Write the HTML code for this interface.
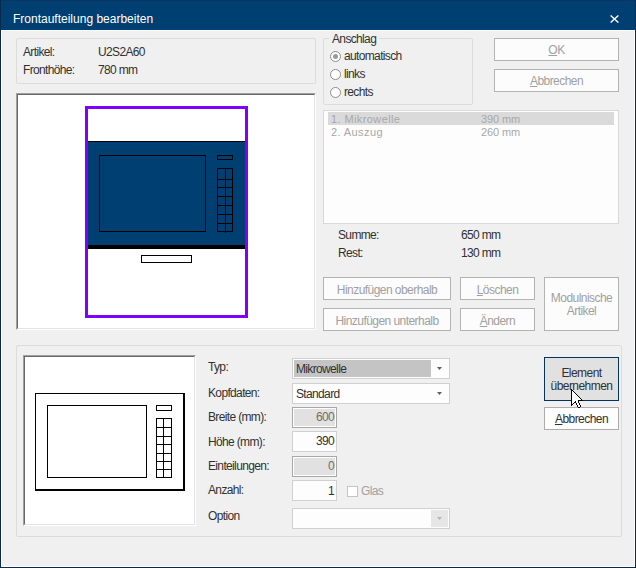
<!DOCTYPE html>
<html><head><meta charset="utf-8">
<style>
html,body{margin:0;padding:0;width:636px;height:568px;overflow:hidden;background:#f0f0f0}
#win{position:absolute;left:0;top:0;width:636px;height:568px;background:#f0f0f0}
.a{position:absolute;box-sizing:border-box}
.t{position:absolute;font:12px/14px "Liberation Sans",sans-serif;letter-spacing:-0.65px;white-space:nowrap;color:#303030}
.g{color:#a0a0a0}
.lg{color:#a8a8a8}
.grp{position:absolute;box-sizing:border-box;border:1px solid #dcdcdc;border-radius:2px}
.btn{position:absolute;box-sizing:border-box;border:1px solid #b3b3b3;background:#fcfcfc}
.bt{position:absolute;left:0;right:0;text-align:center;font:12px/14px "Liberation Sans",sans-serif;letter-spacing:-0.55px;white-space:nowrap;color:#a0a0a0}
.u{text-decoration:underline;text-underline-offset:1px}
.fld{position:absolute;box-sizing:border-box;border:1px solid #d0d0d0;background:#fdfdfd}
.fdis{position:absolute;box-sizing:border-box;border:1px solid #a8a8a8;background:#e1e1e1;box-shadow:inset 0 0 0 1px #fff}
</style></head><body>
<div id="win">
  <!-- title bar -->
  <div class="a" style="left:0;top:0;width:636px;height:30px;background:#003f72"></div>
  <div class="t" style="left:13px;top:12px;font:12px/14px 'Liberation Sans',sans-serif;letter-spacing:0;color:#fff">Frontaufteilung bearbeiten</div>
  <svg class="a" style="left:610px;top:15px" width="9" height="8" viewBox="0 0 9 8"><path d="M0.6 0.5L8.4 7.5M8.4 0.5L0.6 7.5" stroke="#fff" stroke-width="1.4"/></svg>
  <!-- window borders -->
  <div class="a" style="left:0;top:0;width:636px;height:1px;background:#0e3560"></div>
  <div class="a" style="left:0;top:0;width:1px;height:568px;background:#0b2a4a"></div>
  <div class="a" style="left:635px;top:0;width:1px;height:568px;background:#0b2a4a"></div>
  <div class="a" style="left:0;top:567px;width:636px;height:1px;background:#0b2a4a"></div>
  <div class="a" style="left:1px;top:30px;width:1px;height:537px;background:#fff"></div>
  <div class="a" style="left:634px;top:30px;width:1px;height:537px;background:#fff"></div>
  <div class="a" style="left:1px;top:566px;width:634px;height:1px;background:#fff"></div>
  <div class="a" style="left:1px;top:30px;width:634px;height:1px;background:#fff"></div>

  <!-- group 1 -->
  <div class="grp" style="left:16px;top:38px;width:300px;height:46px"></div>
  <div class="t" style="left:23px;top:45px">Artikel:</div>
  <div class="t" style="left:98px;top:45px">U2S2A60</div>
  <div class="t" style="left:23px;top:63px">Fronthöhe:</div>
  <div class="t" style="left:98px;top:63px">780 mm</div>

  <!-- Anschlag group -->
  <div class="grp" style="left:323px;top:38px;width:150px;height:67px"></div>
  <div class="a" style="left:329px;top:36px;width:50px;height:6px;background:#f0f0f0"></div>
  <div class="t" style="left:332px;top:32px">Anschlag</div>
  <div class="a" style="left:330px;top:51px;width:11px;height:11px;border:1px solid #8c8c8c;border-radius:50%;background:#fff"></div>
  <div class="a" style="left:333px;top:54px;width:5px;height:5px;border-radius:50%;background:#9a9a9a"></div>
  <div class="t" style="left:344px;top:49px">automatisch</div>
  <div class="a" style="left:330px;top:69px;width:11px;height:11px;border:1px solid #8c8c8c;border-radius:50%;background:#fff"></div>
  <div class="t" style="left:344px;top:67px">links</div>
  <div class="a" style="left:330px;top:87px;width:11px;height:11px;border:1px solid #8c8c8c;border-radius:50%;background:#fff"></div>
  <div class="t" style="left:344px;top:85px">rechts</div>

  <!-- OK / Abbrechen -->
  <div class="btn" style="left:494px;top:38px;width:125px;height:23px"><div class="bt" style="top:4px"><span class="u">O</span>K</div></div>
  <div class="btn" style="left:494px;top:69px;width:125px;height:23px"><div class="bt" style="top:4px"><span class="u">A</span>bbrechen</div></div>

  <!-- preview panel -->
  <div class="a" style="left:16px;top:93px;width:300px;height:237px;background:#fff;border-top:1px solid #a0a0a0;border-left:1px solid #a0a0a0;border-right:1px solid #fff;border-bottom:1px solid #fff"></div>
  <div class="a" style="left:17px;top:94px;width:298px;height:235px;border-top:1px solid #696969;border-left:1px solid #696969;border-right:1px solid #e3e3e3;border-bottom:1px solid #e3e3e3"></div>

  <!-- list box -->
  <div class="a" style="left:323px;top:110px;width:296px;height:114px;border:1px solid #d9d9d9;background:#fdfdfd"></div>
  <div class="a" style="left:328px;top:112px;width:286px;height:13px;background:#dadada"></div>
  <div class="t lg" style="left:331px;top:113px;font-size:11px;line-height:13px;letter-spacing:0.4px">1. Mikrowelle</div>
  <div class="t lg" style="left:481px;top:113px;font-size:11px;line-height:13px;letter-spacing:-0.1px">390 mm</div>
  <div class="t lg" style="left:331px;top:126px;font-size:11px;line-height:13px;letter-spacing:0.4px">2. Auszug</div>
  <div class="t lg" style="left:481px;top:126px;font-size:11px;line-height:13px;letter-spacing:-0.1px">260 mm</div>

  <div class="t" style="left:338px;top:228px">Summe:</div>
  <div class="t" style="left:461px;top:228px">650 mm</div>
  <div class="t" style="left:338px;top:246px">Rest:</div>
  <div class="t" style="left:461px;top:246px">130 mm</div>

  <div class="btn" style="left:323px;top:277px;width:128px;height:23px"><div class="bt" style="top:5px">Hinzufügen oberhalb</div></div>
  <div class="btn" style="left:323px;top:308px;width:128px;height:23px"><div class="bt" style="top:5px">Hinzufügen unterhalb</div></div>
  <div class="btn" style="left:460px;top:277px;width:75px;height:23px"><div class="bt" style="top:5px"><span class="u">L</span>öschen</div></div>
  <div class="btn" style="left:460px;top:308px;width:75px;height:23px"><div class="bt" style="top:5px"><span class="u">Ä</span>ndern</div></div>
  <div class="btn" style="left:544px;top:277px;width:75px;height:54px"><div class="bt" style="top:13px">Modulnische</div><div class="bt" style="top:26px">Artikel</div></div>

  <!-- bottom group -->
  <div class="grp" style="left:16px;top:345px;width:606px;height:192px"></div>
  <div class="a" style="left:23px;top:355px;width:173px;height:171px;background:#fff;border-top:1px solid #a0a0a0;border-left:1px solid #a0a0a0;border-right:1px solid #fff;border-bottom:1px solid #fff"></div>
  <div class="a" style="left:24px;top:356px;width:171px;height:169px;border-top:1px solid #696969;border-left:1px solid #696969;border-right:1px solid #e3e3e3;border-bottom:1px solid #e3e3e3"></div>

  <div class="t" style="left:208px;top:360px">Typ:</div>
  <div class="t" style="left:208px;top:386px">Kopfdaten:</div>
  <div class="t" style="left:208px;top:410px">Breite (mm):</div>
  <div class="t" style="left:208px;top:435px">Höhe (mm):</div>
  <div class="t" style="left:208px;top:459px">Einteilungen:</div>
  <div class="t" style="left:208px;top:483px">Anzahl:</div>
  <div class="t" style="left:208px;top:509px">Option</div>

  <!-- Typ combo -->
  <div class="fld" style="left:292px;top:358px;width:158px;height:21px"></div>
  <div class="a" style="left:294px;top:360px;width:137px;height:17px;background:#c4c4c4"></div>
  <div class="t" style="left:296px;top:362px">Mikrowelle</div>
  <svg class="a" style="left:437px;top:367px" width="5" height="3" viewBox="0 0 5 3"><path d="M0 0H5L2.5 3Z" fill="#606060"/></svg>
  <!-- Kopfdaten combo -->
  <div class="fld" style="left:292px;top:383px;width:158px;height:21px"></div>
  <div class="t" style="left:296px;top:387px">Standard</div>
  <svg class="a" style="left:437px;top:392px" width="5" height="3" viewBox="0 0 5 3"><path d="M0 0H5L2.5 3Z" fill="#606060"/></svg>

  <!-- numeric fields -->
  <div class="fdis" style="left:292px;top:407px;width:45px;height:21px"></div>
  <div class="t" style="left:292px;width:42px;text-align:right;top:410px;color:#6e6e6e">600</div>
  <div class="fld" style="left:292px;top:431px;width:45px;height:21px"></div>
  <div class="t" style="left:292px;width:42px;text-align:right;top:434px">390</div>
  <div class="fdis" style="left:292px;top:456px;width:45px;height:21px"></div>
  <div class="t" style="left:292px;width:42px;text-align:right;top:459px;color:#6e6e6e">0</div>
  <div class="fld" style="left:292px;top:480px;width:45px;height:21px"></div>
  <div class="t" style="left:292px;width:42px;text-align:right;top:484px">1</div>
  <div class="a" style="left:347px;top:486px;width:11px;height:11px;border:1px solid #c4c4c4;background:#fff"></div>
  <div class="t g" style="left:361px;top:484px">Glas</div>

  <!-- Option combo -->
  <div class="fld" style="left:292px;top:508px;width:158px;height:21px"></div>
  <div class="a" style="left:431px;top:510px;width:17px;height:17px;background:#e6e6e6"></div>
  <svg class="a" style="left:437px;top:517px" width="5" height="3" viewBox="0 0 5 3"><path d="M0 0H5L2.5 3Z" fill="#b4b4b4"/></svg>

  <!-- previews -->
  <svg class="a" style="left:0;top:0" width="636" height="568" shape-rendering="crispEdges"><rect x="88" y="141" width="157" height="108" fill="#003f72"/><rect x="88" y="141" width="157" height="1" fill="#000"/><rect x="88" y="245" width="157" height="4" fill="#000"/><rect x="99" y="155" width="107" height="1" fill="#000"/><rect x="99" y="231" width="107" height="1" fill="#000"/><rect x="99" y="155" width="1" height="77" fill="#000"/><rect x="205" y="155" width="1" height="77" fill="#000"/><rect x="217" y="155" width="16" height="1" fill="#000"/><rect x="217" y="159" width="16" height="1" fill="#000"/><rect x="217" y="155" width="1" height="5" fill="#000"/><rect x="232" y="155" width="1" height="5" fill="#000"/><rect x="217" y="168" width="16" height="1" fill="#000"/><rect x="217" y="231" width="16" height="1" fill="#000"/><rect x="217" y="168" width="1" height="64" fill="#000"/><rect x="232" y="168" width="1" height="64" fill="#000"/><rect x="225" y="168" width="1" height="65" fill="#000"/><rect x="217" y="179" width="16" height="1" fill="#000"/><rect x="217" y="187" width="16" height="1" fill="#000"/><rect x="217" y="196" width="16" height="1" fill="#000"/><rect x="217" y="205" width="16" height="1" fill="#000"/><rect x="217" y="214" width="16" height="1" fill="#000"/><rect x="217" y="223" width="16" height="1" fill="#000"/><rect x="141" y="255" width="51" height="1" fill="#000"/><rect x="141" y="262" width="51" height="1" fill="#000"/><rect x="141" y="255" width="1" height="8" fill="#000"/><rect x="191" y="255" width="1" height="8" fill="#000"/><rect x="85" y="106" width="163" height="3" fill="#8000ff"/><rect x="85" y="315" width="163" height="3" fill="#8000ff"/><rect x="85" y="106" width="3" height="212" fill="#8000ff"/><rect x="245" y="106" width="3" height="212" fill="#8000ff"/><rect x="35" y="393" width="150" height="1" fill="#000"/><rect x="35" y="490" width="150" height="1" fill="#000"/><rect x="35" y="393" width="1" height="98" fill="#000"/><rect x="184" y="393" width="1" height="98" fill="#000"/><rect x="183" y="393" width="1" height="98" fill="#000"/><rect x="35" y="489" width="150" height="1" fill="#000"/><rect x="47" y="405" width="100" height="1" fill="#000"/><rect x="47" y="477" width="100" height="1" fill="#000"/><rect x="47" y="405" width="1" height="73" fill="#000"/><rect x="146" y="405" width="1" height="73" fill="#000"/><rect x="156" y="405" width="16" height="1" fill="#000"/><rect x="156" y="410" width="16" height="1" fill="#000"/><rect x="156" y="405" width="1" height="6" fill="#000"/><rect x="171" y="405" width="1" height="6" fill="#000"/><rect x="156" y="418" width="16" height="1" fill="#000"/><rect x="156" y="477" width="16" height="1" fill="#000"/><rect x="156" y="418" width="1" height="60" fill="#000"/><rect x="171" y="418" width="1" height="60" fill="#000"/><rect x="163" y="418" width="1" height="60" fill="#000"/><rect x="156" y="427" width="16" height="1" fill="#000"/><rect x="156" y="436" width="16" height="1" fill="#000"/><rect x="156" y="444" width="16" height="1" fill="#000"/><rect x="156" y="453" width="16" height="1" fill="#000"/><rect x="156" y="461" width="16" height="1" fill="#000"/><rect x="156" y="469" width="16" height="1" fill="#000"/></svg>
  <!-- right buttons -->
  <div class="a" style="left:544px;top:357px;width:75px;height:44px;border:1px solid #04335e;background:#e1e1e1"></div>
  <div class="bt" style="left:544px;width:75px;right:auto;top:366px;color:#303030">Element</div>
  <div class="bt" style="left:544px;width:75px;right:auto;top:379px;color:#303030">übernehmen</div>
  <div class="a" style="left:544px;top:407px;width:75px;height:23px;border:1px solid #adadad;background:#fdfdfd"></div>
  <div class="bt" style="left:544px;width:75px;right:auto;top:412px;color:#303030"><span class="u">A</span>bbrechen</div>
  <!-- cursor -->
  <svg class="a" style="left:571px;top:389px" width="12" height="19" shape-rendering="crispEdges"><rect x="0" y="0" width="1" height="1" fill="#000"/><rect x="0" y="1" width="2" height="1" fill="#000"/><rect x="0" y="2" width="1" height="1" fill="#000"/><rect x="1" y="2" width="1" height="1" fill="#fff"/><rect x="2" y="2" width="1" height="1" fill="#000"/><rect x="0" y="3" width="1" height="1" fill="#000"/><rect x="1" y="3" width="2" height="1" fill="#fff"/><rect x="3" y="3" width="1" height="1" fill="#000"/><rect x="0" y="4" width="1" height="1" fill="#000"/><rect x="1" y="4" width="3" height="1" fill="#fff"/><rect x="4" y="4" width="1" height="1" fill="#000"/><rect x="0" y="5" width="1" height="1" fill="#000"/><rect x="1" y="5" width="4" height="1" fill="#fff"/><rect x="5" y="5" width="1" height="1" fill="#000"/><rect x="0" y="6" width="1" height="1" fill="#000"/><rect x="1" y="6" width="5" height="1" fill="#fff"/><rect x="6" y="6" width="1" height="1" fill="#000"/><rect x="0" y="7" width="1" height="1" fill="#000"/><rect x="1" y="7" width="6" height="1" fill="#fff"/><rect x="7" y="7" width="1" height="1" fill="#000"/><rect x="0" y="8" width="1" height="1" fill="#000"/><rect x="1" y="8" width="7" height="1" fill="#fff"/><rect x="8" y="8" width="1" height="1" fill="#000"/><rect x="0" y="9" width="1" height="1" fill="#000"/><rect x="1" y="9" width="8" height="1" fill="#fff"/><rect x="9" y="9" width="1" height="1" fill="#000"/><rect x="0" y="10" width="1" height="1" fill="#000"/><rect x="1" y="10" width="9" height="1" fill="#fff"/><rect x="10" y="10" width="1" height="1" fill="#000"/><rect x="0" y="11" width="1" height="1" fill="#000"/><rect x="1" y="11" width="6" height="1" fill="#fff"/><rect x="7" y="11" width="5" height="1" fill="#000"/><rect x="0" y="12" width="1" height="1" fill="#000"/><rect x="1" y="12" width="3" height="1" fill="#fff"/><rect x="4" y="12" width="1" height="1" fill="#000"/><rect x="5" y="12" width="2" height="1" fill="#fff"/><rect x="7" y="12" width="1" height="1" fill="#000"/><rect x="0" y="13" width="1" height="1" fill="#000"/><rect x="1" y="13" width="2" height="1" fill="#fff"/><rect x="3" y="13" width="2" height="1" fill="#000"/><rect x="5" y="13" width="2" height="1" fill="#fff"/><rect x="7" y="13" width="1" height="1" fill="#000"/><rect x="0" y="14" width="1" height="1" fill="#000"/><rect x="1" y="14" width="1" height="1" fill="#fff"/><rect x="2" y="14" width="1" height="1" fill="#000"/><rect x="5" y="14" width="1" height="1" fill="#000"/><rect x="6" y="14" width="2" height="1" fill="#fff"/><rect x="8" y="14" width="1" height="1" fill="#000"/><rect x="0" y="15" width="2" height="1" fill="#000"/><rect x="5" y="15" width="1" height="1" fill="#000"/><rect x="6" y="15" width="2" height="1" fill="#fff"/><rect x="8" y="15" width="1" height="1" fill="#000"/><rect x="0" y="16" width="1" height="1" fill="#000"/><rect x="6" y="16" width="1" height="1" fill="#000"/><rect x="7" y="16" width="2" height="1" fill="#fff"/><rect x="9" y="16" width="1" height="1" fill="#000"/><rect x="6" y="17" width="1" height="1" fill="#000"/><rect x="7" y="17" width="2" height="1" fill="#fff"/><rect x="9" y="17" width="1" height="1" fill="#000"/><rect x="7" y="18" width="2" height="1" fill="#000"/></svg>
</div>
</body></html>
